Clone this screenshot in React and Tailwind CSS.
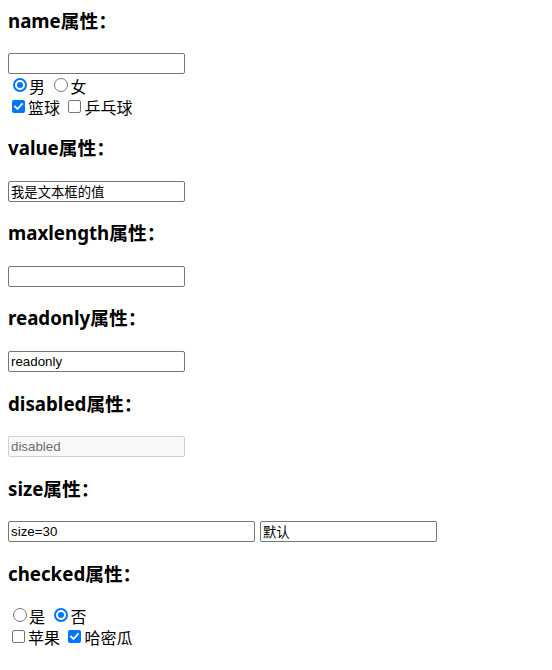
import React from "react";

const H = ({ children, first }) => (
  <h3
    className={
      "h-[24.7px] text-[18.72px] font-bold leading-[24.7px] text-black font-['Noto_Sans','Noto_Sans_CJK_SC',sans-serif] mb-[18.72px] " +
      (first ? "mt-0" : "mt-[18.72px]")
    }
  >
    {children}
  </h3>
);

const inputCls =
  "box-border h-[21px] rounded-[2px] border border-[#767676] bg-white px-[2px] py-[1px] text-[13.33px] leading-[17px] text-black font-['Liberation_Sans','Noto_Sans_CJK_SC',sans-serif] outline-none";

const TextLine = ({ children }) => (
  <div className="flex h-[23px] items-center gap-[5px]">{children}</div>
);

const Radio = ({ label, checked }) => (
  <label className="mr-[4.4px] flex items-center">
    {checked ? (
      <span className="mb-[1px] ml-[5px] mr-[2px] box-border flex h-[14px] w-[14px] items-center justify-center rounded-full border-[2px] border-[#0075ff] bg-white">
        <span className="h-[6px] w-[6px] rounded-full bg-[#0075ff]" />
      </span>
    ) : (
      <span className="mb-[1px] ml-[5px] mr-[2px] box-border h-[14px] w-[14px] rounded-full border border-[#767676] bg-white" />
    )}
    <span className="leading-[20px]">{label}</span>
  </label>
);

const Check = ({ label, checked }) => (
  <label className="mr-[4.4px] flex items-center">
    {checked ? (
      <span className="ml-[4px] mr-[3px] flex h-[13px] w-[13px] items-center justify-center rounded-[2px] bg-[#0075ff]">
        <svg width="11" height="11" viewBox="0 0 11 11">
          <path d="M2 5.6 L4.4 8 L9 3" fill="none" stroke="#fff" strokeWidth="1.8" strokeLinecap="square" />
        </svg>
      </span>
    ) : (
      <span className="ml-[4px] mr-[3px] box-border h-[13px] w-[13px] rounded-[2px] border border-[#767676] bg-white" />
    )}
    <span className="leading-[20px]">{label}</span>
  </label>
);

const Row = ({ children }) => (
  <div className="flex h-[21px] items-center text-[16px] leading-[20px] text-black font-['Noto_Sans_CJK_SC','Noto_Sans',sans-serif]">
    {children}
  </div>
);

export default function App() {
  return (
    <div className="bg-white pl-[8px] pt-[9px] pb-[20px]">
      <H first>name属性：</H>
      <TextLine>
        <input type="text" name="username" className={inputCls + " w-[177px]"} />
      </TextLine>
      <Row>
        <Radio label="男" checked />
        <Radio label="女" />
      </Row>
      <Row>
        <Check label="篮球" checked />
        <Check label="乒乓球" />
      </Row>

      <H>value属性：</H>
      <TextLine>
        <input type="text" defaultValue="我是文本框的值" className={inputCls + " w-[177px]"} />
      </TextLine>

      <H>maxlength属性：</H>
      <TextLine>
        <input type="text" maxLength={5} className={inputCls + " w-[177px]"} />
      </TextLine>

      <H>readonly属性：</H>
      <TextLine>
        <input type="text" readOnly defaultValue="readonly" className={inputCls + " w-[177px]"} />
      </TextLine>

      <H>disabled属性：</H>
      <TextLine>
        <input
          type="text"
          disabled
          defaultValue="disabled"
          className="box-border h-[21px] w-[177px] rounded-[2px] border border-[#d0d0d0] bg-[#f8f8f8] px-[2px] py-[1px] text-[13.33px] leading-[17px] text-[#6d6d6d] font-['Liberation_Sans','Noto_Sans_CJK_SC',sans-serif] outline-none"
        />
      </TextLine>

      <H>size属性：</H>
      <TextLine>
        <input type="text" defaultValue="size=30" className={inputCls + " w-[247px]"} />
        <input type="text" defaultValue="默认" className={inputCls + " w-[177px]"} />
      </TextLine>

      <H>checked属性：</H>
      <Row>
        <Radio label="是" />
        <Radio label="否" checked />
      </Row>
      <Row>
        <Check label="苹果" />
        <Check label="哈密瓜" checked />
      </Row>
    </div>
  );
}
